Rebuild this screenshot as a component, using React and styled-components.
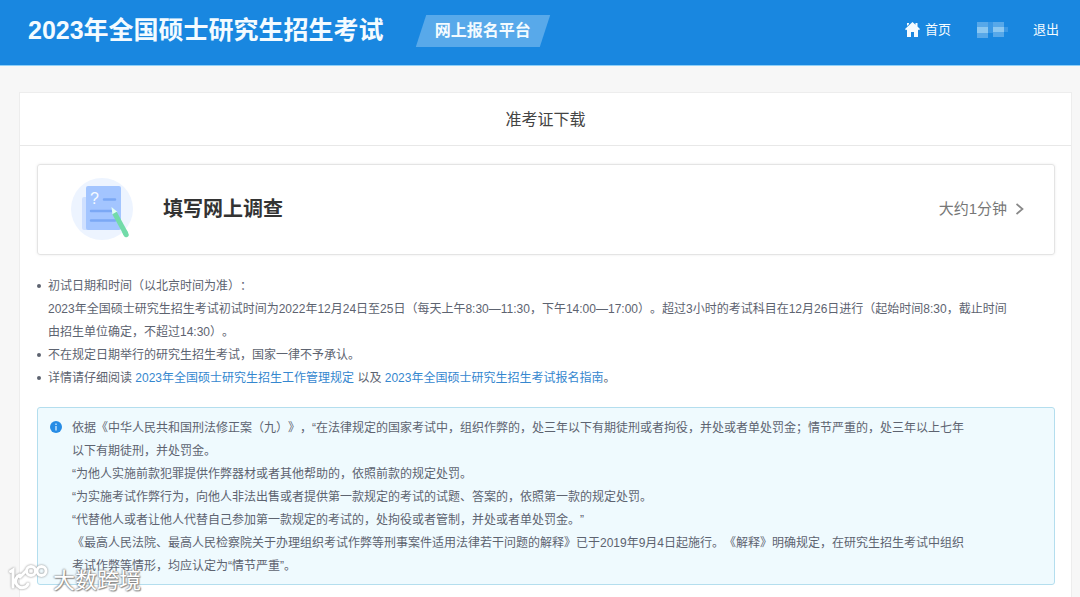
import React from "react";
import styled, { createGlobalStyle } from "styled-components";

const GlobalStyle = createGlobalStyle`
  * { box-sizing: border-box; }
  body {
    margin: 0;
    background: #f7f7f7;
    color: #5d6370;
    font: 12px/23px "Liberation Sans", "Noto Sans CJK SC", sans-serif;
    text-spacing-trim: space-all;
  }
  h1, h2, h3, p, ul { margin: 0; padding: 0; }
`;

const Page = styled.div`
  position: relative;
  display: flex;
  flex-direction: column;
  min-height: 100vh;
`;

const Header = styled.header`
  display: flex;
  align-items: center;
  height: 66px;
  padding: 0 21px 6px 28px;
  background: #1987e0;
  border-bottom: 1px solid #8fd0f8;
  color: #f4fbff;
`;

const Title = styled.h1`
  font: bold 25px/32px "Liberation Sans", "Noto Sans CJK SC", sans-serif;
  white-space: nowrap;
`;

const Platform = styled.div`
  position: relative;
  z-index: 0;
  margin: 3px 0 0 32px;
  padding: 0 19px;
  font: bold 16px/32px "Liberation Sans", "Noto Sans CJK SC", sans-serif;
  white-space: nowrap;

  &::before {
    content: "";
    position: absolute;
    inset: 0 5px;
    z-index: -1;
    background: #58a9ea;
    transform: skewX(-18deg);
  }
`;

const Nav = styled.nav`
  display: flex;
  align-items: center;
  gap: 25px;
  margin-left: auto;
`;

const NavLink = styled.a`
  display: flex;
  align-items: center;
  gap: 5px;
  color: inherit;
  font-size: 13px;
  text-decoration: none;
  white-space: nowrap;
`;

const Sheet = styled.main`
  flex: 1;
  margin: 26px 8px 0 19px;
  background: #fff;
  border: 1px solid #ededed;
  border-bottom: 0;
`;

const SheetTitle = styled.h2`
  padding: 15px 0 14px;
  border-bottom: 1px solid #e8e8e8;
  color: #444;
  font-size: 16px;
  font-weight: normal;
  text-align: center;
`;

const Content = styled.div`
  padding: 18px 16px 12px 17px;
`;

const Survey = styled.a`
  display: flex;
  align-items: center;
  height: 91px;
  padding: 0 30px 2px 33px;
  border: 1px solid #e4e4e4;
  border-radius: 3px;
  box-shadow: 0 0 3px rgba(0, 0, 0, 0.08);
  color: #777;
  text-decoration: none;
`;

const SurveyTitle = styled.h3`
  margin-left: 30px;
  color: #333;
  font-size: 20px;
  line-height: 24px;
`;

const Duration = styled.span`
  display: flex;
  align-items: center;
  gap: 8px;
  margin-left: auto;
  font-size: 15px;
`;

const Notes = styled.ul`
  margin-top: 20px;
  list-style: none;
`;

const Note = styled.li`
  display: flex;
  gap: 7px;

  &::before {
    content: "";
    flex: none;
    width: 4px;
    height: 4px;
    margin-top: 9px;
    border-radius: 50%;
    background: #5d6370;
  }
`;

const TextLink = styled.a`
  color: #3587cf;
  text-decoration: none;
`;

const Notice = styled.section`
  display: flex;
  gap: 10px;
  margin-top: 17px;
  padding: 9px 12px 6px;
  border: 1px solid #b4deee;
  border-radius: 3px;
  background: #effafe;

  svg {
    flex: none;
    margin-top: 4px;
  }
`;

const Watermark = styled.div`
  position: absolute;
  left: 9px;
  bottom: 5px;
  display: flex;
  align-items: center;
  gap: 4px;
  color: #fff;
  font: 22px/24px "Noto Sans CJK SC", sans-serif;
  text-shadow: 0 0 2px #777, 0 0 2px #888, 1px 1px 1px #999;

  svg { filter: drop-shadow(0 0 1px #888); }
`;

const HomeIcon = () => (
  <svg width="15" height="15" viewBox="0 0 15 15" aria-hidden="true">
    <path fill="currentColor" d="M7.500 0 0 7l1 1.200L2 7.400V15h4v-5h3v5h4V7.400l1 .8L15 7l-2.500-2.400V1h-2v1.700zM2 1h2v1.200L2 4z" />
  </svg>
);

const MaskedName = () => (
  <svg width="32" height="17" viewBox="0 0 32 17" role="img" aria-label="用户">
    <path fill="#57a8e9" d="M1 1h11v16H1z M17 1h11v15H17z" />
    <path fill="#8bc7f1" d="M1 6h11v6H1z M17 6h11v5H17z" />
    <path fill="#3a98e6" d="M12 1h5v11h-5z M28 6h4v5h-4z" />
  </svg>
);

const SurveyIcon = () => (
  <svg width="62" height="62" viewBox="0 0 62 62" aria-hidden="true">
    <circle cx="31" cy="31" r="31" fill="#edf4ff" />
    <rect x="11" y="19" width="8" height="33" rx="2" fill="#cfe0ff" />
    <rect x="15" y="8" width="35" height="44" rx="2" fill="#a3c5ff" />
    <path d="M33 21.500h11M20 33h22M20 42.500h24" stroke="#7ba8f5" strokeWidth="2.500" strokeLinecap="round" />
    <text x="19" y="26" fill="#f5faff" fontSize="16">?</text>
    <path d="m40.500 29 6 5-5 2.700z" fill="#e3fff3" />
    <path d="m43.500 35 11.500 21" stroke="#72dba9" strokeWidth="5" />
    <path d="m54 54.500 1.200 2.200" stroke="#72dba9" strokeWidth="5" strokeLinecap="round" />
  </svg>
);

const ArrowIcon = () => (
  <svg width="9" height="14" viewBox="0 0 9 14" aria-hidden="true">
    <path d="m1.500 2 6 5-6 5" fill="none" stroke="#888" strokeWidth="1.700" />
  </svg>
);

const InfoIcon = () => (
  <svg width="12" height="12" viewBox="0 0 12 12" aria-hidden="true">
    <circle cx="6" cy="6" r="6" fill="#278ce5" />
    <path d="M6 2.500v1.500M6 5v4.500" stroke="#c9e6ff" strokeWidth="1.400" />
  </svg>
);

const WatermarkLogo = () => (
  <svg width="40" height="28" viewBox="0 0 40 28" fill="none" stroke="#fff" strokeWidth="3" strokeLinecap="round" aria-hidden="true">
    <path d="M1.500 7.500 4 6v17M17 7l-6 6M11 11a6.500 6.500 0 1 0 8 9" />
    <circle cx="22" cy="7" r="4.500" />
    <circle cx="32.500" cy="7" r="4.500" />
  </svg>
);

export default function App() {
  return (
    <Page>
      <GlobalStyle />
      <Header>
        <Title>2023年全国硕士研究生招生考试</Title>
        <Platform>网上报名平台</Platform>
        <Nav>
          <NavLink href="#home"><HomeIcon />首页</NavLink>
          <MaskedName />
          <NavLink href="#logout">退出</NavLink>
        </Nav>
      </Header>
      <Sheet>
        <SheetTitle>准考证下载</SheetTitle>
        <Content>
          <Survey href="#survey">
            <SurveyIcon />
            <SurveyTitle>填写网上调查</SurveyTitle>
            <Duration>大约1分钟<ArrowIcon /></Duration>
          </Survey>
          <Notes>
            <Note>
              <div>
                <p>初试日期和时间（以北京时间为准）：</p>
                <p>
                  2023年全国硕士研究生招生考试初试时间为2022年12月24日至25日（每天上午8:30—11:30，下午14:00—17:00）。超过3小时的考试科目在12月26日进行（起始时间8:30，截止时间<br />
                  由招生单位确定，不超过14:30）。
                </p>
              </div>
            </Note>
            <Note><p>不在规定日期举行的研究生招生考试，国家一律不予承认。</p></Note>
            <Note>
              <p>
                详情请仔细阅读 <TextLink href="#rules">2023年全国硕士研究生招生工作管理规定</TextLink> 以及 <TextLink href="#guide">2023年全国硕士研究生招生考试报名指南</TextLink>。
              </p>
            </Note>
          </Notes>
          <Notice>
            <InfoIcon />
            <div>
              <p>
                依据《中华人民共和国刑法修正案（九）》，“在法律规定的国家考试中，组织作弊的，处三年以下有期徒刑或者拘役，并处或者单处罚金；情节严重的，处三年以上七年<br />
                以下有期徒刑，并处罚金。
              </p>
              <p>“为他人实施前款犯罪提供作弊器材或者其他帮助的，依照前款的规定处罚。</p>
              <p>“为实施考试作弊行为，向他人非法出售或者提供第一款规定的考试的试题、答案的，依照第一款的规定处罚。</p>
              <p>“代替他人或者让他人代替自己参加第一款规定的考试的，处拘役或者管制，并处或者单处罚金。”</p>
              <p>
                《最高人民法院、最高人民检察院关于办理组织考试作弊等刑事案件适用法律若干问题的解释》已于2019年9月4日起施行。《解释》明确规定，在研究生招生考试中组织<br />
                考试作弊等情形，均应认定为“情节严重”。
              </p>
            </div>
          </Notice>
        </Content>
      </Sheet>
      <Watermark><WatermarkLogo />大数跨境</Watermark>
    </Page>
  );
}
